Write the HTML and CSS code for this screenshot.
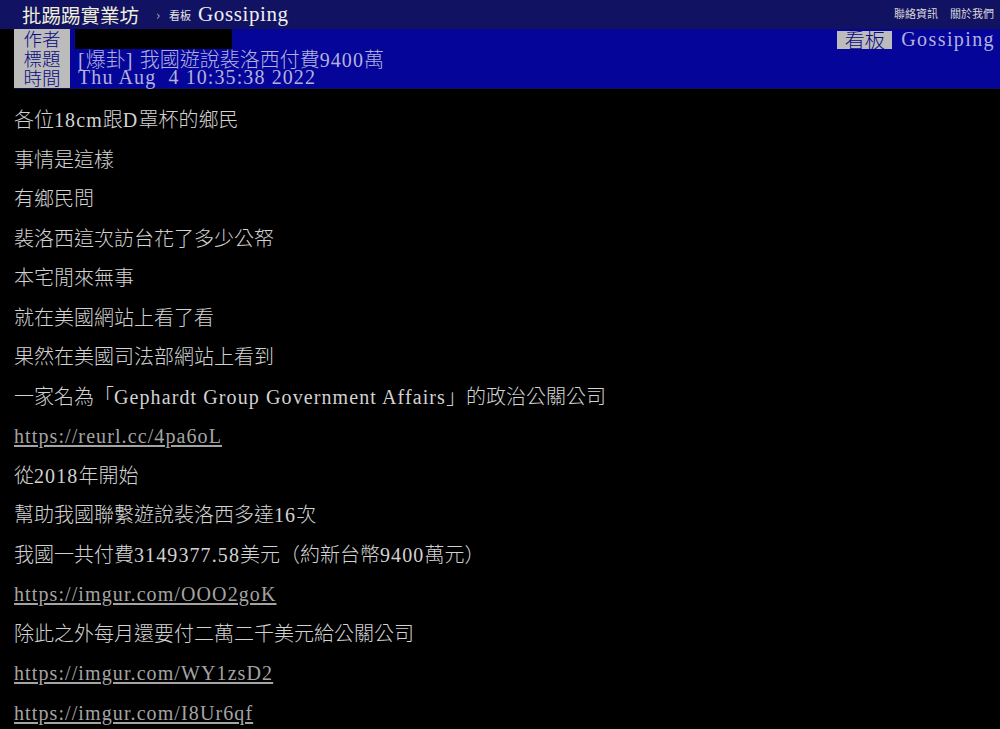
FILE: index.html
```html
<!DOCTYPE html>
<html lang="zh-Hant">
<head>
<meta charset="utf-8">
<title>[爆卦] 我國遊說裴洛西付費9400萬 - 看板 Gossiping - 批踢踢實業坊</title>
<link rel="stylesheet" href="styles.css">
</head>
<body>
<div class="topbar">
  <div class="crumbs">
    <span class="logo">批踢踢實業坊</span>
    <span class="sep">›</span>
    <span class="board-label">看板</span>
    <span class="en board">Gossiping</span>
  </div>
  <div class="links">
    <span>聯絡資訊</span>
    <span>關於我們</span>
  </div>
</div>

<div class="meta">
  <div class="meta-row">
    <span class="tag">作者</span>
    <span class="redact"></span>
    <span class="tag tag-right">看板</span>
    <span class="en value value-right">Gossiping</span>
  </div>
  <div class="meta-row">
    <span class="tag">標題</span>
    <span class="value"><span class="en pre">[</span>爆卦<span class="en pre">] </span>我國遊說裴洛西付費<span class="en">9400</span>萬</span>
  </div>
  <div class="meta-row">
    <span class="tag">時間</span>
    <span class="en value pre">Thu Aug  4 10:35:38 2022</span>
  </div>
</div>

<div class="content">
  <div class="line">各位<span class="en">18cm</span>跟<span class="en">D</span>罩杯的鄉民</div>
  <div class="line">事情是這樣</div>
  <div class="line">有鄉民問</div>
  <div class="line">裴洛西這次訪台花了多少公帑</div>
  <div class="line">本宅閒來無事</div>
  <div class="line">就在美國網站上看了看</div>
  <div class="line">果然在美國司法部網站上看到</div>
  <div class="line">一家名為「<span class="en">Gephardt Group Government Affairs</span>」的政治公關公司</div>
  <div class="line"><a class="en link" href="#">https://reurl.cc/4pa6oL</a></div>
  <div class="line">從<span class="en">2018</span>年開始</div>
  <div class="line">幫助我國聯繫遊說裴洛西多達<span class="en">16</span>次</div>
  <div class="line">我國一共付費<span class="en">3149377.58</span>美元（約新台幣<span class="en">9400</span>萬元）</div>
  <div class="line"><a class="en link" href="#">https://imgur.com/OOO2goK</a></div>
  <div class="line">除此之外每月還要付二萬二千美元給公關公司</div>
  <div class="line"><a class="en link" href="#">https://imgur.com/WY1zsD2</a></div>
  <div class="line"><a class="en link" href="#">https://imgur.com/I8Ur6qf</a></div>
</div>
</body>
</html>
```

FILE: styles.css
```css
html, body {
  margin: 0;
  padding: 0;
  background: #000;
}

body {
  width: 1000px;
  height: 729px;
  overflow: hidden;
  font-family: "Noto Sans CJK TC", "Noto Sans CJK SC", sans-serif;
  font-weight: 300;
  font-size: 20px;
  color: #d2d2d2;
}

.en {
  font-family: "Liberation Serif", "Noto Sans CJK TC", serif;
  font-size: 20px;
  letter-spacing: 1.1px;
  font-weight: 400;
}

.pre {
  white-space: pre;
}

/* top bar */
.topbar {
  height: 29px;
  background: #121262;
  display: flex;
  align-items: center;
  justify-content: space-between;
}

.crumbs {
  display: flex;
  align-items: center;
  padding-left: 22px;
}

.logo {
  font-size: 19.5px;
  color: #f0f0d8;
  font-weight: 400;
  line-height: 29px;
}

.sep {
  font-size: 14px;
  color: #c8c8c8;
  margin-left: 17px;
  margin-right: 9px;
  line-height: 29px;
}

.board-label {
  font-size: 11px;
  color: #e4e4e4;
  font-weight: 400;
  margin-right: 7px;
}

.board {
  color: #eeeeee;
  font-size: 21px;
  letter-spacing: 0.6px;
}

.links {
  display: flex;
  gap: 12px;
  padding-right: 6px;
  font-size: 11px;
  font-weight: 400;
  color: #d8d8d8;
  align-self: flex-start;
  padding-top: 5px;
}

/* meta lines */
.meta {
  margin-left: 14px;
  background: #05059a;
  border-bottom: 1px solid #10104a;
}

.meta-row {
  display: flex;
  align-items: stretch;
  height: 19.7px;
  line-height: 19.7px;
}

.tag {
  width: 56px;
  text-align: center;
  background: #bcbcbc;
  color: #0a0a82;
  font-size: 18.5px;
  flex: none;
}

.value {
  color: #b2b2da;
  margin-left: 8px;
}

.redact {
  width: 157px;
  background: #000;
  margin-left: 5px;
}

.tag-right {
  margin-left: auto;
  width: 55px;
  height: 18px;
  margin-top: 2px;
  line-height: 18px;
  font-size: 20px;
}

.value-right {
  margin-left: 9px;
  margin-right: 5px;
  margin-top: 1px;
  letter-spacing: 1.4px;
}

/* content */
.content {
  padding-top: 10px;
  padding-left: 14px;
}

.line {
  height: 39.5px;
  line-height: 39.5px;
  white-space: nowrap;
}

.link {
  color: #a4a4a4;
  text-decoration: underline;
  text-underline-offset: 2px;
}
```
